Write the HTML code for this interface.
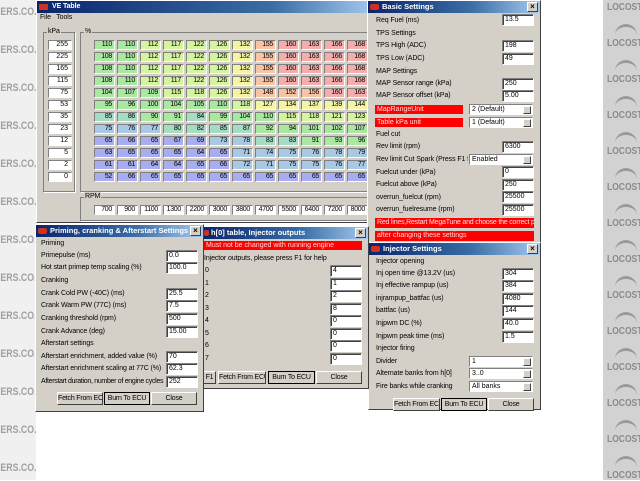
<!DOCTYPE html>
<html><head><meta charset="utf-8"><style>
*{margin:0;padding:0;box-sizing:border-box}
body{width:640px;height:480px;background:#fff;position:relative;overflow:hidden;font-family:"Liberation Sans",sans-serif;font-size:7px;color:#000}
.a{position:absolute}
.lstrip{left:0;top:0;width:36px;height:480px;background:#f0f0f0}
.ls{position:absolute;left:-6px;font:bold 11px "Liberation Sans",sans-serif;color:#a0a0a0;transform:scaleX(.8);transform-origin:left}
.rstrip{left:603px;top:0;width:37px;height:480px;background:#d2d2d2}
.rs{position:absolute;left:4px;font:bold 10px "Liberation Sans",sans-serif;color:#8a8a8a;transform:scaleX(.85);transform-origin:left}
.rlogo{position:absolute;left:12px;width:22px;height:14px;border-top:3px solid #9a9a9a;border-radius:14px 14px 0 0}
.win{position:absolute;background:#d4d0c8;border:1px solid #fff;border-right-color:#404040;border-bottom-color:#404040}
.tb{position:absolute;left:0;top:0;right:0;height:12px;background:linear-gradient(90deg,#0a246a,#3a6ea5 60%,#a6caf0);color:#fff;font-weight:bold;font-size:7.5px;line-height:12px;padding-left:14px;white-space:nowrap;overflow:hidden}
.tb i{position:absolute;left:2px;top:3px;width:9px;height:6px;background:#d03020;border-radius:2px}
.x{position:absolute;right:2px;top:1px;width:11px;height:10px;background:#d4d0c8;border:1px solid #fff;border-right-color:#404040;border-bottom-color:#404040;color:#000;font-size:8px;line-height:8px;text-align:center}
.in{position:absolute;background:#fff;border:1px solid #808080;border-right-color:#fff;border-bottom-color:#fff;box-shadow:inset 1px 1px 0 #404040;height:12px;font-size:7px;line-height:10px;padding-left:2px}
.l{position:absolute;font-size:7px;line-height:10px;white-space:nowrap;letter-spacing:-.1px}
.red{position:absolute;background:#f00;color:#fdd;font-size:7px;line-height:9px;padding-left:2px;white-space:nowrap;overflow:hidden}
.dd{position:absolute;background:#fff;border:1px solid #808080;border-right-color:#fff;border-bottom-color:#fff;height:11px;font-size:7px;line-height:9px;padding-left:2px}
.dd b{position:absolute;right:1px;top:1px;width:8px;height:8px;background:#d4d0c8;border:1px solid #fff;border-right-color:#404040;border-bottom-color:#404040}
.btn{position:absolute;height:13px;background:#d4d0c8;border:1px solid #fff;border-right-color:#404040;border-bottom-color:#404040;font-size:7px;line-height:11px;text-align:center;white-space:nowrap;overflow:hidden;letter-spacing:-.2px}
.grp{position:absolute;border:1px solid #808080;box-shadow:1px 1px 0 #fff}
.row{position:absolute;left:94px;display:flex;gap:2px}
.row span{width:21px;height:10px;border:1px solid #808080;border-right-color:#fff;border-bottom-color:#fff;font-size:7px;line-height:8px;text-align:right;padding-right:2px;display:block;letter-spacing:-.3px}
.k{position:absolute;left:48px;width:24px;height:10px;background:#fff;border:1px solid #808080;border-right-color:#fff;border-bottom-color:#fff;text-align:right;padding-right:3px;font-size:7px;line-height:8px}
.B{background:#a8acf0}.T{background:#a8c8e4}.Q{background:#a4dcc4}.G{background:#a8e8a0}.Y{background:#d4f4a0}.W{background:#f4f4a4}.O{background:#f8c4a4}.R{background:#f4acac}.Wh{background:#fff}
</style></head><body>
<div class="a lstrip">
<div class="ls" style="top:6px">DERS.CO.</div><div class="ls" style="top:44px">DERS.CO.</div><div class="ls" style="top:82px">DERS.CO.</div><div class="ls" style="top:120px">DERS.CO.</div><div class="ls" style="top:158px">DERS.CO.</div><div class="ls" style="top:196px">DERS.CO.</div><div class="ls" style="top:234px">DERS.CO.</div><div class="ls" style="top:272px">DERS.CO.</div><div class="ls" style="top:310px">DERS.CO.</div><div class="ls" style="top:348px">DERS.CO.</div><div class="ls" style="top:386px">DERS.CO.</div><div class="ls" style="top:424px">DERS.CO.</div><div class="ls" style="top:462px">DERS.CO.</div>
</div>
<div class="a rstrip">
<div class="rs" style="top:2px">LOCOST</div>
<div class="rlogo" style="top:24px"></div><div class="rs" style="top:38px">LOCOST</div>
<div class="rlogo" style="top:60px"></div><div class="rs" style="top:74px">LOCOST</div>
<div class="rlogo" style="top:96px"></div><div class="rs" style="top:110px">LOCOST</div>
<div class="rlogo" style="top:132px"></div><div class="rs" style="top:146px">LOCOST</div>
<div class="rlogo" style="top:168px"></div><div class="rs" style="top:182px">LOCOST</div>
<div class="rlogo" style="top:204px"></div><div class="rs" style="top:218px">LOCOST</div>
<div class="rlogo" style="top:240px"></div><div class="rs" style="top:254px">LOCOST</div>
<div class="rlogo" style="top:276px"></div><div class="rs" style="top:290px">LOCOST</div>
<div class="rlogo" style="top:312px"></div><div class="rs" style="top:326px">LOCOST</div>
<div class="rlogo" style="top:348px"></div><div class="rs" style="top:362px">LOCOST</div>
<div class="rlogo" style="top:384px"></div><div class="rs" style="top:398px">LOCOST</div>
<div class="rlogo" style="top:420px"></div><div class="rs" style="top:434px">LOCOST</div>
<div class="rlogo" style="top:456px"></div><div class="rs" style="top:470px">LOCOST</div>
</div>

<!-- VE Table -->
<div class="win" style="left:36px;top:0;width:340px;height:223px"></div>
<div class="a" style="left:37px;top:1px;width:338px;height:12px;background:linear-gradient(90deg,#0a246a,#3a6ea5 70%,#a6caf0)"></div>
<div class="a" style="left:39px;top:4px;width:9px;height:6px;background:#d03020"></div>
<div class="l" style="left:52px;top:2px;color:#fff;font-weight:bold">VE Table</div>
<div class="l" style="left:40px;top:13px">File&nbsp;&nbsp; Tools</div>
<div class="grp" style="left:43px;top:32px;width:32px;height:160px"></div>
<div class="l" style="left:47px;top:27px;background:#d4d0c8;padding:0 1px">kPa</div>
<div class="grp" style="left:80px;top:32px;width:300px;height:160px"></div>
<div class="l" style="left:84px;top:27px;background:#d4d0c8;padding:0 1px">%</div>
<div class="k" style="top:40px">255</div><div class="k" style="top:52px">225</div><div class="k" style="top:64px">165</div><div class="k" style="top:76px">115</div><div class="k" style="top:88px">75</div><div class="k" style="top:100px">53</div><div class="k" style="top:112px">35</div><div class="k" style="top:124px">23</div><div class="k" style="top:136px">12</div><div class="k" style="top:148px">5</div><div class="k" style="top:160px">2</div><div class="k" style="top:172px">0</div>
<div class="row" style="top:40px"><span class="G">110</span><span class="G">110</span><span class="Y">112</span><span class="Y">117</span><span class="Y">122</span><span class="Y">126</span><span class="W">132</span><span class="O">155</span><span class="R">160</span><span class="R">163</span><span class="R">166</span><span class="R">168</span></div>
<div class="row" style="top:52px"><span class="G">108</span><span class="G">110</span><span class="Y">112</span><span class="Y">117</span><span class="Y">122</span><span class="Y">126</span><span class="W">132</span><span class="O">155</span><span class="R">160</span><span class="R">163</span><span class="R">166</span><span class="R">168</span></div>
<div class="row" style="top:64px"><span class="G">108</span><span class="G">110</span><span class="Y">112</span><span class="Y">117</span><span class="Y">122</span><span class="Y">126</span><span class="W">132</span><span class="O">155</span><span class="R">160</span><span class="R">163</span><span class="R">166</span><span class="R">168</span></div>
<div class="row" style="top:76px"><span class="G">108</span><span class="G">110</span><span class="Y">112</span><span class="Y">117</span><span class="Y">122</span><span class="Y">126</span><span class="W">132</span><span class="O">155</span><span class="R">160</span><span class="R">163</span><span class="R">166</span><span class="R">168</span></div>
<div class="row" style="top:88px"><span class="G">104</span><span class="G">107</span><span class="G">109</span><span class="Y">115</span><span class="Y">118</span><span class="Y">126</span><span class="W">132</span><span class="O">148</span><span class="O">152</span><span class="O">156</span><span class="R">160</span><span class="R">163</span></div>
<div class="row" style="top:100px"><span class="G">95</span><span class="G">96</span><span class="G">100</span><span class="G">104</span><span class="G">105</span><span class="G">110</span><span class="Y">118</span><span class="W">127</span><span class="W">134</span><span class="W">137</span><span class="W">139</span><span class="W">144</span></div>
<div class="row" style="top:112px"><span class="Q">85</span><span class="Q">86</span><span class="G">90</span><span class="G">91</span><span class="Q">84</span><span class="G">99</span><span class="G">104</span><span class="G">110</span><span class="Y">115</span><span class="Y">118</span><span class="Y">121</span><span class="Y">123</span></div>
<div class="row" style="top:124px"><span class="T">75</span><span class="T">76</span><span class="T">77</span><span class="Q">80</span><span class="Q">82</span><span class="Q">85</span><span class="Q">87</span><span class="G">92</span><span class="G">94</span><span class="G">101</span><span class="G">102</span><span class="G">107</span></div>
<div class="row" style="top:136px"><span class="B">65</span><span class="B">66</span><span class="B">65</span><span class="B">67</span><span class="B">69</span><span class="T">73</span><span class="T">78</span><span class="Q">83</span><span class="Q">83</span><span class="G">91</span><span class="G">93</span><span class="G">96</span></div>
<div class="row" style="top:148px"><span class="B">63</span><span class="B">65</span><span class="B">65</span><span class="B">65</span><span class="B">64</span><span class="B">65</span><span class="T">71</span><span class="T">74</span><span class="T">75</span><span class="T">76</span><span class="T">78</span><span class="T">79</span></div>
<div class="row" style="top:160px"><span class="B">61</span><span class="B">61</span><span class="B">64</span><span class="B">64</span><span class="B">65</span><span class="B">66</span><span class="T">72</span><span class="T">71</span><span class="T">75</span><span class="T">75</span><span class="T">76</span><span class="T">77</span></div>
<div class="row" style="top:172px"><span class="B">52</span><span class="B">66</span><span class="B">65</span><span class="B">65</span><span class="B">65</span><span class="B">65</span><span class="B">65</span><span class="B">65</span><span class="B">65</span><span class="B">65</span><span class="B">65</span><span class="B">65</span></div>
<div class="grp" style="left:80px;top:197px;width:300px;height:24px"></div>
<div class="l" style="left:84px;top:192px;background:#d4d0c8;padding:0 1px">RPM</div>
<div class="row" style="top:205px"><span class="Wh">700</span><span class="Wh">900</span><span class="Wh">1100</span><span class="Wh">1300</span><span class="Wh">2200</span><span class="Wh">3000</span><span class="Wh">3800</span><span class="Wh">4700</span><span class="Wh">5500</span><span class="Wh">6400</span><span class="Wh">7200</span><span class="Wh">8000</span></div>

<!-- Basic Settings -->
<div class="win" style="left:367px;top:0;width:174px;height:243px"><div class="tb"><i></i>Basic Settings<div class="x">×</div></div></div>
<div class="l" style="left:376px;top:16px">Req Fuel (ms)</div><div class="in" style="left:502px;top:14px;width:32px">13.5</div>
<div class="l" style="left:376px;top:29px">TPS Settings</div>
<div class="l" style="left:376px;top:41px">TPS High (ADC)</div><div class="in" style="left:502px;top:40px;width:32px">198</div>
<div class="l" style="left:376px;top:54px">TPS Low (ADC)</div><div class="in" style="left:502px;top:53px;width:32px">49</div>
<div class="l" style="left:376px;top:67px">MAP Settings</div>
<div class="l" style="left:376px;top:79px">MAP Sensor range (kPa)</div><div class="in" style="left:502px;top:78px;width:32px">250</div>
<div class="l" style="left:376px;top:91px">MAP Sensor offset (kPa)</div><div class="in" style="left:502px;top:90px;width:32px">5.00</div>
<div class="red" style="left:375px;top:105px;width:88px">MapRangeUnit</div><div class="dd" style="left:469px;top:104px;width:64px">2 (Default)<b></b></div>
<div class="red" style="left:375px;top:118px;width:88px">Table kPa unit</div><div class="dd" style="left:469px;top:117px;width:64px">1 (Default)<b></b></div>
<div class="l" style="left:376px;top:130px">Fuel cut</div>
<div class="l" style="left:376px;top:142px">Rev limit (rpm)</div><div class="in" style="left:502px;top:141px;width:32px">6300</div>
<div class="l" style="left:376px;top:155px;width:92px;overflow:hidden">Rev limit Cut Spark (Press F1 for</div><div class="dd" style="left:469px;top:154px;width:64px">Enabled<b></b></div>
<div class="l" style="left:376px;top:168px">Fuelcut under (kPa)</div><div class="in" style="left:502px;top:166px;width:32px">0</div>
<div class="l" style="left:376px;top:180px">Fuelcut above (kPa)</div><div class="in" style="left:502px;top:179px;width:32px">250</div>
<div class="l" style="left:376px;top:193px">overrun_fuelcut (rpm)</div><div class="in" style="left:502px;top:191px;width:32px">25500</div>
<div class="l" style="left:376px;top:205px">overrun_fuelresume (rpm)</div><div class="in" style="left:502px;top:204px;width:32px">25500</div>
<div class="red" style="left:375px;top:218px;width:159px;height:10px;letter-spacing:-.2px">Red lines,Restart MegaTune and choose the correct profile</div>
<div class="red" style="left:375px;top:231px;width:159px;height:10px">after changing these settings</div>

<!-- Injector Settings -->
<div class="win" style="left:368px;top:242px;width:173px;height:168px"><div class="tb"><i></i>Injector Settings<div class="x">×</div></div></div>
<div class="l" style="left:376px;top:257px">Injector opening</div>
<div class="l" style="left:376px;top:269px">Inj open time @13.2V (us)</div><div class="in" style="left:502px;top:268px;width:32px">304</div>
<div class="l" style="left:376px;top:281px">Inj effective rampup (us)</div><div class="in" style="left:502px;top:280px;width:32px">384</div>
<div class="l" style="left:376px;top:294px">injrampup_battfac (us)</div><div class="in" style="left:502px;top:293px;width:32px">4080</div>
<div class="l" style="left:376px;top:306px">battfac (us)</div><div class="in" style="left:502px;top:305px;width:32px">144</div>
<div class="l" style="left:376px;top:319px">Injpwm DC (%)</div><div class="in" style="left:502px;top:318px;width:32px">40.0</div>
<div class="l" style="left:376px;top:332px">Injpwm peak time (ms)</div><div class="in" style="left:502px;top:331px;width:32px">1.5</div>
<div class="l" style="left:376px;top:344px">Injector firing</div>
<div class="l" style="left:376px;top:357px">Divider</div><div class="dd" style="left:469px;top:356px;width:64px">1<b></b></div>
<div class="l" style="left:376px;top:369px">Alternate banks from h[0]</div><div class="dd" style="left:469px;top:368px;width:64px">3..0<b></b></div>
<div class="l" style="left:376px;top:382px">Fire banks while cranking</div><div class="dd" style="left:469px;top:381px;width:64px">All banks<b></b></div>
<div class="btn" style="left:393px;top:398px;width:47px">Fetch From ECU</div><div class="btn" style="left:441px;top:398px;width:46px;border:1px solid #000">Burn To ECU</div><div class="btn" style="left:488px;top:398px;width:46px">Close</div>

<!-- h[0] table -->
<div class="win" style="left:202px;top:226px;width:167px;height:163px"><div class="tb" style="padding-left:8px"><i style="left:1px;width:5px"></i>h[0] table, Injector outputs<div class="x">×</div></div></div>
<div class="red" style="left:204px;top:241px;width:158px;height:9px">Must not be changed with running engine</div>
<div class="l" style="left:204px;top:254px">Injector outputs, please press F1 for help</div>
<div class="l" style="left:205px;top:266px">0</div><div class="in" style="left:330px;top:265px;width:32px">4</div>
<div class="l" style="left:205px;top:279px">1</div><div class="in" style="left:330px;top:278px;width:32px">1</div>
<div class="l" style="left:205px;top:291px">2</div><div class="in" style="left:330px;top:290px;width:32px">2</div>
<div class="l" style="left:205px;top:304px">3</div><div class="in" style="left:330px;top:303px;width:32px">8</div>
<div class="l" style="left:205px;top:316px">4</div><div class="in" style="left:330px;top:315px;width:32px">0</div>
<div class="l" style="left:205px;top:329px">5</div><div class="in" style="left:330px;top:328px;width:32px">0</div>
<div class="l" style="left:205px;top:341px">6</div><div class="in" style="left:330px;top:340px;width:32px">0</div>
<div class="l" style="left:205px;top:354px">7</div><div class="in" style="left:330px;top:353px;width:32px">0</div>
<div class="btn" style="left:203px;top:371px;width:13px">F1</div><div class="btn" style="left:218px;top:371px;width:48px">Fetch From ECU</div><div class="btn" style="left:268px;top:371px;width:47px;border:1px solid #000">Burn To ECU</div><div class="btn" style="left:316px;top:371px;width:46px">Close</div>

<!-- Priming -->
<div class="win" style="left:35px;top:224px;width:169px;height:188px"><div class="tb" style="padding-right:14px"><i></i>Priming, cranking &amp; Afterstart Settings<div class="x">×</div></div></div>
<div class="l" style="left:41px;top:239px">Priming</div>
<div class="l" style="left:41px;top:251px">Primepulse (ms)</div><div class="in" style="left:166px;top:250px;width:32px">0.0</div>
<div class="l" style="left:41px;top:263px">Hot start primep temp scaling (%)</div><div class="in" style="left:166px;top:262px;width:32px">100.0</div>
<div class="l" style="left:41px;top:276px">Cranking</div>
<div class="l" style="left:41px;top:289px">Crank Cold PW (-40C) (ms)</div><div class="in" style="left:166px;top:288px;width:32px">25.5</div>
<div class="l" style="left:41px;top:301px">Crank Warm PW (77C) (ms)</div><div class="in" style="left:166px;top:300px;width:32px">7.5</div>
<div class="l" style="left:41px;top:314px">Cranking threshold (rpm)</div><div class="in" style="left:166px;top:313px;width:32px">500</div>
<div class="l" style="left:41px;top:327px">Crank Advance (deg)</div><div class="in" style="left:166px;top:326px;width:32px">15.00</div>
<div class="l" style="left:41px;top:339px">Afterstart settings</div>
<div class="l" style="left:41px;top:352px">Afterstart enrichment, added value (%)</div><div class="in" style="left:166px;top:351px;width:32px">70</div>
<div class="l" style="left:41px;top:364px">Afterstart enrichment scaling at 77C (%)</div><div class="in" style="left:166px;top:363px;width:32px">62.3</div>
<div class="l" style="left:41px;top:377px;letter-spacing:-.3px">Afterstart duration, number of engine cycles</div><div class="in" style="left:166px;top:376px;width:32px">252</div>
<div class="btn" style="left:57px;top:392px;width:46px">Fetch From ECU</div><div class="btn" style="left:104px;top:392px;width:46px;border:1px solid #000">Burn To ECU</div><div class="btn" style="left:151px;top:392px;width:46px">Close</div>
</body></html>
